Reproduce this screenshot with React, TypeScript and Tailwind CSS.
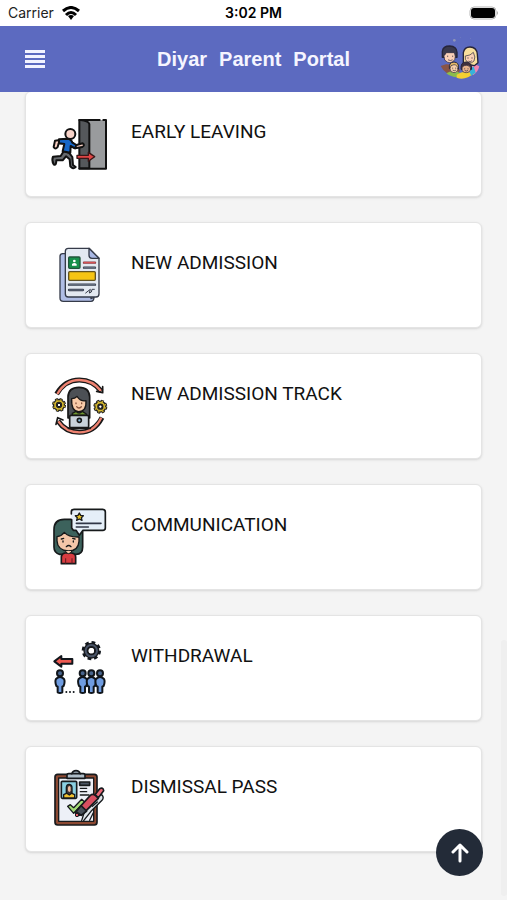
import React from 'react';

const EarlyLeavingIcon = () => (
  <svg viewBox="30 36 168 168" className="h-14 w-14 overflow-visible" aria-hidden="true" fill="none" stroke="#111" strokeWidth="6" strokeLinecap="round" strokeLinejoin="round">
    <path d="M115 45H195V191H115Z" fill="#999b9d" stroke="none" />
    <path d="M115 45H176M187 45H195V191H115" />
    <path d="M115 45H119Q142 47 145 57V190H115Z" fill="#55585b" />
    {/* legs */}
    <path d="M68 139L59 153L36 155Q31 166 38 178Q46 183 46 166L65 166L75 154L86 163L88 184Q96 194 104 186L96 180L94 156L84 143Z" fill="#66696d" />
    {/* arms */}
    <path d="M56 105L42 107L38 126Q43 135 50 126L53 115L64 115M91 110L104 121L125 115Q133 121 124 126L103 130L91 124" fill="#f6cdc0" />
    <path d="M54 103L79 101Q91 102 94 113L106 120L102 130L89 123L88 143L65 139L70 117L54 115Z" fill="#1667c9" />
    <circle cx="88" cy="87" r="15" fill="#f8d3c9" />
    <path d="M108 151H142V142L161 155L142 169V160H108Z" fill="#df4545" stroke="#3a1717" strokeWidth="4" />
  </svg>
);

const NewAdmissionIcon = () => (
  <svg viewBox="30 39 168 168" className="h-14 w-14 overflow-visible" aria-hidden="true" fill="none" stroke="#353b49" strokeWidth="4" strokeLinecap="round" strokeLinejoin="round">
    <path d="M57 64Q57 56 65 56H150V191Q158 188 159 187Q159 199 150 199H67Q57 199 57 189Z" fill="#afbde5" />
    <path d="M82 40H144L174 70V177Q174 186 165 186H82Q73 186 73 177V49Q73 40 82 40Z" fill="#e3e9f1" />
    <path d="M144 40V61Q144 70 153 70H174Z" fill="#a9b8e4" />
    <rect x="83" y="66" width="34" height="34" rx="3" fill="#16904b" stroke="#20543a" />
    <circle cx="100" cy="78" r="4" fill="#fff" stroke="none" />
    <path d="M93 92V87Q100 81 107 87V92Z" fill="#fff" stroke="none" />
    <path d="M129 83H162" stroke="#873a45" strokeWidth="7" />
    <path d="M129 83H162" stroke="#e45656" strokeWidth="3" />
    <path d="M129 98H162M84 149H162M84 165H126" strokeWidth="7" />
    <path d="M129 98H162M84 149H162M84 165H126" stroke="#8490a5" strokeWidth="2" />
    <rect x="83" y="110" width="80" height="26" rx="3" fill="#f6c514" stroke="#625321" />
    <path d="M134 174L148 163L145 174L151 171L153 163H160" strokeWidth="3" />
  </svg>
);

const TrackGear = ({ x, y }: { x: number; y: number }) => (
  <g transform={`translate(${x} ${y})`} strokeLinecap="butt">
    <circle r="17" stroke="#222" strokeWidth="8" strokeDasharray="8 5.35" />
    <circle r="11" stroke="#222" strokeWidth="15" />
    <circle r="12" stroke="#d5b72d" strokeWidth="5" />
    <circle r="16" stroke="#d5b72d" strokeWidth="4" strokeDasharray="4 8.57" strokeDashoffset="-2" />
    <circle r="5" fill="#fff" strokeWidth="3" />
  </g>
);

const AdmissionTrackIcon = () => (
  <svg viewBox="30 42 168 168" className="h-14 w-14 overflow-visible" aria-hidden="true" fill="none" stroke="#171717" strokeWidth="5" strokeLinecap="round" strokeLinejoin="round">
    <path d="M47 87Q71 45 115 45Q156 45 181 79" strokeWidth="15" strokeLinecap="butt" />
    <path d="M49 87Q73 45 115 45Q155 45 180 78" stroke="#ee8270" strokeWidth="7" strokeLinecap="butt" />
    <path d="M185 65V83L167 79" />
    <path d="M183 158Q160 202 115 202Q74 202 51 168" strokeWidth="15" strokeLinecap="butt" />
    <path d="M181 158Q159 202 115 202Q75 202 52 169" stroke="#ee8270" strokeWidth="7" strokeLinecap="butt" />
    <path d="M45 178L50 158L66 165" />
    <path d="M81 159V96Q82 67 114 67Q145 67 146 96V159Z" fill="#4c5055" />
    <path d="M92 101Q90 138 113 140Q137 140 135 107Q120 111 108 94Q102 101 92 101Z" fill="#f8cba8" strokeWidth="4" />
    <path d="M105 114V116M122 114V116M107 125Q113 133 121 125" stroke="#86523c" strokeWidth="4" />
    <path d="M94 151V145L105 139Q114 149 124 139L136 147V151Z" fill="#6f982f" strokeWidth="4" />
    <rect x="86" y="151" width="57" height="37" rx="4" fill="#c9d2da" />
    <path d="M82 190H148" />
    <circle cx="115" cy="166" r="6" fill="#89bde0" />
    <TrackGear x={54} y={120} />
    <TrackGear x={178} y={125} />
  </svg>
);

const CommunicationIcon = () => (
  <svg viewBox="30 45 168 168" className="h-14 w-14 overflow-visible" aria-hidden="true" fill="none" stroke="#171a1b" strokeWidth="5" strokeLinecap="round" strokeLinejoin="round">
    <path d="M39 104Q39 73 70 73H96Q125 78 125 110V156Q125 178 105 178H56Q39 174 39 156Z" fill="#3c625c" />
    <path d="M48 137V125Q63 122 70 112Q83 127 114 126V139Q112 168 82 168Q49 165 48 137Z" fill="#f4c6a8" strokeWidth="4" />
    <path d="M66 138V141M97 138V141M61 132L68 130M95 130L102 132M76 155Q83 148 90 155" strokeWidth="4" />
    <path d="M61 206V185Q62 176 72 174H92Q104 176 104 186V206Z" fill="#d83c40" />
    <path d="M74 191V205M93 191V205" stroke="#611d22" strokeWidth="3" />
    <path d="M73 168Q82 185 93 168" fill="#f4c6a8" strokeWidth="3" />
    <path d="M91 50Q91 43 99 43H185Q193 43 193 51V99Q193 106 185 106H126L115 121L105 106H97L91 99Z" fill="#e5eff8" stroke="none" />
    <path d="M91 57V50Q91 43 99 43H185Q193 43 193 51V99Q193 106 185 106H126L115 121L105 106H97L92 99V74" />
    <path d="M106 85H180M106 96H142" stroke="#303746" />
    <path d="M115 54L119 61L127 62L121 68L123 76L115 72L107 76L109 68L103 62L111 61Z" fill="#e6c226" strokeWidth="4" />
  </svg>
);

const WithdrawalIcon = () => (
  <svg viewBox="30 39 168 168" className="h-14 w-14 overflow-visible" aria-hidden="true" fill="none" stroke="#11161c" strokeWidth="6" strokeLinecap="round" strokeLinejoin="round">
    <path d="M40 100L61 84V93H94V107H61V116Z" fill="#ee5a52" />
    <circle cx="151" cy="68" r="25" strokeWidth="8" strokeDasharray="11 8.63" strokeLinecap="butt" />
    <circle cx="151" cy="68" r="16" stroke="#17191d" strokeWidth="16" />
    <circle cx="151" cy="68" r="17" stroke="#495467" strokeWidth="6" />
    <circle cx="151" cy="68" r="8" fill="#fff" stroke="none" />
    {[57, 125, 151, 177].map((x) => (
      <g key={x} transform={`translate(${x} 131)`} fill="#6f9ce0">
        <path d="M-12 22Q-16 29 -11 43L-7 45V62Q0 66 7 62V45L11 43Q16 29 12 22Q6 16 0 16Q-6 16 -12 22Z" />
        <circle cx="0" cy="5" r="9" fill="#48658e" />
      </g>
    ))}
    <path d="M76 192H76M87 192H87M98 192H98" />
  </svg>
);

const DismissalPassIcon = () => (
  <svg viewBox="30 42 168 168" className="h-14 w-14 overflow-visible" aria-hidden="true" fill="none" stroke="#171a1d" strokeWidth="5" strokeLinecap="round" strokeLinejoin="round">
    <rect x="42" y="49" width="126" height="152" rx="8" fill="#8c4932" />
    <path d="M53 60H158V190H53Z" fill="#edf0f7" strokeWidth="4" />
    <path d="M78 51Q78 47 83 47H93Q95 38 105 38Q115 38 117 47H127Q132 47 132 52V61H78Z" fill="#aebdc8" />
    <path d="M92 47H118" />
    <rect x="61" y="70" width="46" height="51" rx="3" fill="#8bd0e2" />
    <path d="M68 120V110Q84 99 101 110V120Z" fill="#f2c331" strokeWidth="4" />
    <path d="M76 105V88Q77 78 85 79Q94 81 93 91V105L85 111Z" fill="#3e3334" strokeWidth="4" />
    <ellipse cx="85" cy="93" rx="6" ry="10" fill="#f2bfa2" strokeWidth="2" />
    <rect x="116" y="72" width="30" height="10" fill="#4b5563" />
    <path d="M118 91H137M118 101H137M118 111H144" strokeWidth="4" />
    <path d="M128 188L150 160L183 127Q190 119 183 111L172 108L148 146L130 162L122 188" fill="#dfe6eb" strokeWidth="4" />
    <path d="M80 145L88 140L98 149L122 124L131 132L98 166Z" fill="#a3db77" strokeWidth="4" />
    <path d="M103 162L148 112Q156 106 165 114L172 121L124 169L107 174Z" fill="#d84f61" />
    <path d="M162 110L176 92Q186 87 188 98L172 119Z" fill="#ec6878" />
    <path d="M105 161L120 143L137 159L121 172Z" fill="#48505a" />
    <circle cx="108" cy="171" r="5" fill="#ef6470" strokeWidth="3" />
    <path d="M146 187L157 164M154 145L169 132" strokeWidth="4" />
  </svg>
);

const FamilyIcon = () => (
  <svg viewBox="48 24 120 126" className="h-[42px] w-10 overflow-visible" aria-hidden="true" stroke="#26243a" strokeWidth="3" strokeLinecap="round" strokeLinejoin="round">
    <g stroke="none" fill="#9196b7">
      <circle cx="82" cy="31" r="4" />
      <circle cx="101" cy="22" r="1" />
      <circle cx="131" cy="25" r="1" />
    </g>
    <path d="M41 108L57 103L84 105L99 120L91 140Q54 135 41 108Z" fill="#895446" stroke="none" />
    <path d="M142 102L157 109Q153 126 139 135L124 116Z" fill="#f384b1" stroke="none" />
    <path d="M109 100V68Q112 51 129 51Q149 51 151 73L153 98L142 107Z" fill="#f9df9c" strokeWidth="4" />
    <path d="M116 78Q131 77 139 67Q147 82 141 93Q127 107 116 90Z" fill="#fbd1b4" strokeWidth="2" />
    <path d="M46 82V64Q48 48 68 48Q89 49 90 67V82Z" fill="#39384c" strokeWidth="4" />
    <path d="M51 77Q57 73 57 68H82Q87 81 83 89Q70 107 54 91Z" fill="#fbd0b7" strokeWidth="2" />
    <path d="M62 78V80M77 78V80M64 90Q70 94 76 90M123 83V85M135 83V85M125 94Q130 97 134 93" strokeWidth="2" fill="none" />
    <path d="M58 130Q80 117 99 129L91 142Q71 141 58 130Z" fill="#8cbc4b" stroke="none" />
    <path d="M89 134Q106 123 121 126L143 129Q114 153 89 143Z" fill="#f4cf32" stroke="none" />
    <path d="M126 119L140 109L146 128L132 137Z" fill="#36b3db" stroke="none" />
    <path d="M67 114Q65 97 81 96Q97 97 95 116Z" fill="#e9ba66" strokeWidth="3" />
    <ellipse cx="81" cy="116" rx="12" ry="12" fill="#fbd1aa" strokeWidth="2" />
    <path d="M102 117Q100 96 117 96Q135 96 134 117Z" fill="#40303b" strokeWidth="3" />
    <ellipse cx="118" cy="117" rx="13" ry="11" fill="#e7b28c" strokeWidth="2" />
    <path d="M77 114V115M86 114V115M78 121Q82 124 86 121M113 116V117M123 116V117M114 122Q118 125 122 122" strokeWidth="2" fill="none" />
  </svg>
);

const services = [
  { title: 'EARLY LEAVING', icon: <EarlyLeavingIcon /> },
  { title: 'NEW ADMISSION', icon: <NewAdmissionIcon /> },
  { title: 'NEW ADMISSION TRACK', icon: <AdmissionTrackIcon /> },
  { title: 'COMMUNICATION', icon: <CommunicationIcon /> },
  { title: 'WITHDRAWAL', icon: <WithdrawalIcon /> },
  { title: 'DISMISSAL PASS', icon: <DismissalPassIcon /> },
];

const StatusBar = () => (
  <div className="grid h-[26px] grid-cols-3 items-center bg-white px-2 font-['Inter',sans-serif] text-sm text-[#222]">
    <div className="flex items-center gap-2">
      <span>Carrier</span>
      <svg viewBox="0 0 18 14" className="h-3.5 w-[18px]" aria-hidden="true" fill="none" stroke="#000" strokeWidth="3">
        <path d="M1 5Q9 -2 17 5M4 9Q9 4 14 9" />
        <path d="M6 10Q9 8 12 10L9 14Z" fill="#000" stroke="none" />
      </svg>
    </div>
    <span className="text-center font-semibold text-black">3:02 PM</span>
    <svg viewBox="0 0 30 14" className="h-3.5 w-[30px] justify-self-end" aria-hidden="true">
      <rect x="1" y="1" width="26" height="12" rx="4" fill="#fff" stroke="#b5b5b5" />
      <rect x="2" y="2" width="24" height="10" rx="3" fill="#000" />
      <path d="M28 5Q30 7 28 9Z" fill="#aaa" />
    </svg>
  </div>
);

const App = () => {
  return (
    <div className="min-h-screen bg-[#f4f4f4]">
      {/* ---------------- top bar ---------------- */}
      <header className="sticky top-0 z-10">
        <StatusBar />
        <div className="flex h-[66px] items-center justify-between bg-[#5c6ac0] px-6">
          <button type="button" aria-label="Open menu" className="flex w-10 items-center">
            <svg viewBox="0 0 20 18" className="h-[18px] w-[22px]" aria-hidden="true" fill="#f2f3ff">
              <path d="M0 0H20V3H0ZM0 5H20V8H0ZM0 10H20V13H0ZM0 15H20V18H0Z" />
            </svg>
          </button>
          <h1 className="flex gap-3 font-['Liberation_Sans',Arial,sans-serif] text-xl font-bold text-[#f5f5ff]">
            <span>Diyar</span> <span>Parent</span> <span>Portal</span>
          </h1>
          <button type="button" aria-label="Family profile">
            <FamilyIcon />
          </button>
        </div>
      </header>
      {/* ---------------- services list ---------------- */}
      <main className="-mt-px flex flex-col gap-[25px] px-[25px] pb-12">
        {services.map((service) => (
          <a
            key={service.title}
            href="#"
            className="flex h-[106px] items-start gap-6 rounded-md border border-[#e4e4e4] bg-white px-[25px] py-[25px] shadow-sm"
          >
            {service.icon}
            <span className="font-['Roboto',sans-serif] text-[19px] leading-[30px] text-[#111]">{service.title}</span>
          </a>
        ))}
      </main>
      {/* scroll position */}
      <div className="fixed right-0 bottom-1 h-64 w-1.5 rounded-full bg-[#efefef]" />
      <button
        type="button"
        aria-label="Back to top"
        className="fixed right-6 bottom-6 z-10 flex h-[47px] w-[47px] items-center justify-center rounded-full bg-[#232b38]"
      >
        <svg viewBox="0 0 18 20" className="h-5 w-[18px]" aria-hidden="true" fill="none" stroke="#fff" strokeWidth="3" strokeLinecap="round" strokeLinejoin="round">
          <path d="M9 18V2M2 9L9 2L16 9" />
        </svg>
      </button>
    </div>
  );
};

export default App;
